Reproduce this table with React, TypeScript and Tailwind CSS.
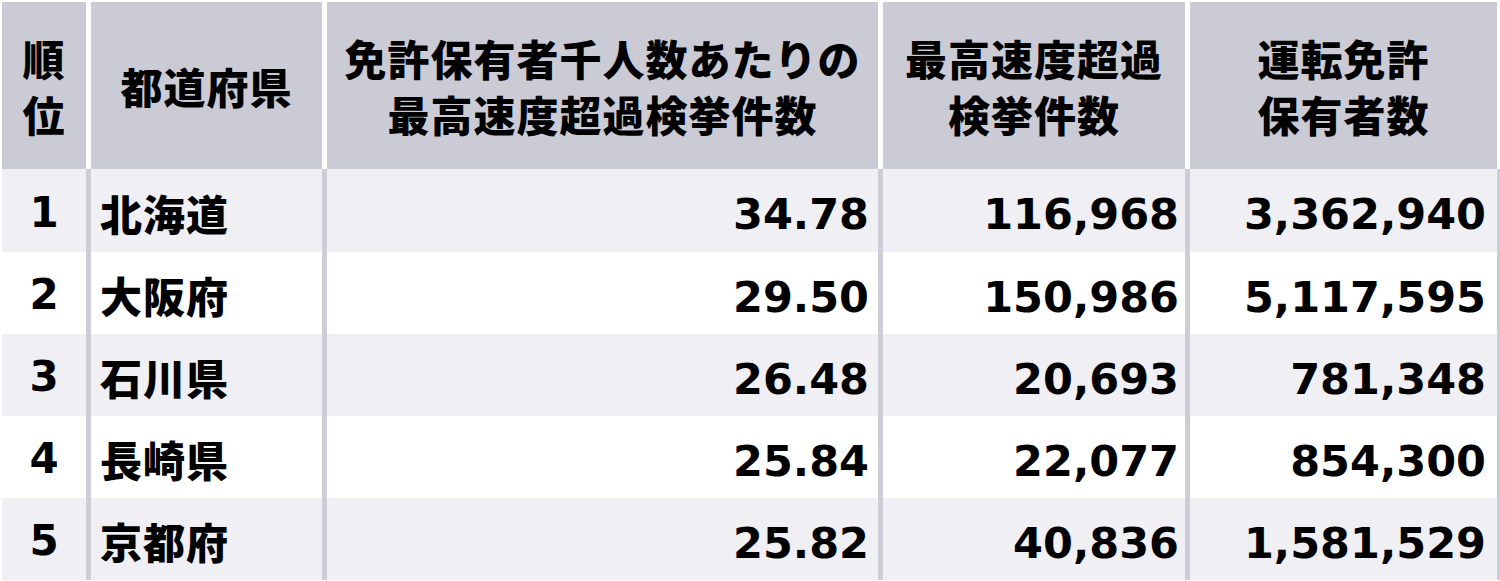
import React from 'react';

const rows = [
  { rank: '1', pref: '北海道', rate: '34.78', count: '116,968', holders: '3,362,940' },
  { rank: '2', pref: '大阪府', rate: '29.50', count: '150,986', holders: '5,117,595' },
  { rank: '3', pref: '石川県', rate: '26.48', count: '20,693', holders: '781,348' },
  { rank: '4', pref: '長崎県', rate: '25.84', count: '22,077', holders: '854,300' },
  { rank: '5', pref: '京都府', rate: '25.82', count: '40,836', holders: '1,581,529' },
];

const jp = "font-['Noto_Sans_CJK_JP','Noto_Sans',sans-serif]";
const num = "font-['DejaVu_Sans','Liberation_Sans',sans-serif]";
const cols = 'grid grid-cols-[84px_231px_551px_302px_307px] gap-x-[5px]';

export default function App() {
  return (
    <div className="w-[1500px] h-[581px] bg-white pt-[2px] pl-[2px] overflow-hidden text-black">
      <div className={`${cols} h-[167px] bg-white`}>
        <HeadCell lines={['順', '位']} />
        <HeadCell lines={['都道府県']} />
        <HeadCell lines={['免許保有者千人数あたりの', '最高速度超過検挙件数']} />
        <HeadCell lines={['最高速度超過', '検挙件数']} />
        <HeadCell lines={['運転免許', '保有者数']} />
      </div>
      {rows.map((r, i) => (
        <div key={r.rank} className={`${cols} bg-[#cdcdd8] ${i === 0 ? 'h-[83px]' : 'h-[82px]'}`}>
          <Cell tint={i % 2 === 0} className="justify-center">
            <span className={`${num} text-[42px] font-bold leading-none pt-[4px]`}>{r.rank}</span>
          </Cell>
          <Cell tint={i % 2 === 0} className="pl-[9px]">
            <span className={`${jp} text-[42px] font-black leading-none tracking-[1px] pt-[4px]`}>{r.pref}</span>
          </Cell>
          <Cell tint={i % 2 === 0} className="justify-end pr-[9px]">
            <NumText>{r.rate}</NumText>
          </Cell>
          <Cell tint={i % 2 === 0} className="justify-end pr-[6px]">
            <NumText>{r.count}</NumText>
          </Cell>
          <Cell tint={i % 2 === 0} className="justify-end pr-[11px]">
            <NumText>{r.holders}</NumText>
          </Cell>
        </div>
      ))}
    </div>
  );
}

const HeadCell = ({ lines }: { lines: string[] }) => (
  <div className="bg-[#cbcbd6] flex flex-col items-center justify-center">
    {lines.map(l => (
      <div key={l} className={`${jp} text-[42px] font-black leading-[56px] tracking-[1px] whitespace-nowrap`}>{l}</div>
    ))}
  </div>
);

const Cell = ({ tint, className, children }: any) => (
  <div className={`flex items-center ${tint ? 'bg-[#efeff4]' : 'bg-white'} ${className}`}>{children}</div>
);

const NumText = ({ children }: any) => (
  <span className={`${num} text-[43px] font-bold leading-none pt-[8px]`}>{children}</span>
);
